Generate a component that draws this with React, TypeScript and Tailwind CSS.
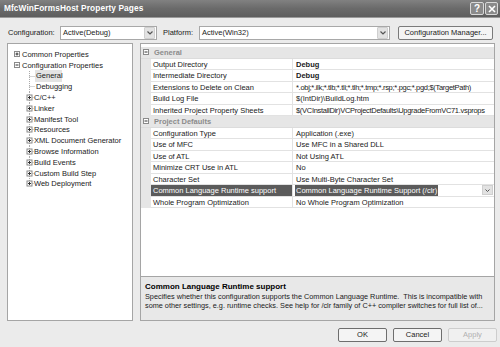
import React from "react";

function Chevron() {
  return (
    <div className="w-[11px] h-[12px] bg-[#e2e2e2] border border-[#cfcfcf] rounded-[1px] flex items-center justify-center shrink-0">
      <svg width="6" height="4" viewBox="0 0 6 4">
        <path d="M0.5 0.5 L3 3 L5.5 0.5" fill="none" stroke="#555" strokeWidth="1.2" />
      </svg>
    </div>
  );
}

function Box({ open }: { open?: boolean }) {
  return (
    <svg width="6" height="6" viewBox="0 0 6 6" className="shrink-0">
      <rect x="0.5" y="0.5" width="5" height="5" fill="#fff" stroke="#8a8a8a" />
      <path d="M1.5 3 H4.5" stroke="#333" />
      {!open && <path d="M3 1.5 V4.5" stroke="#333" />}
    </svg>
  );
}

// connector cell for child nodes of the tree
function Branch({ expander, last }: { expander?: boolean; last?: boolean }) {
  const w = expander ? 8 : 9;
  return (
    <svg width={w} height="11" viewBox={`0 0 ${w} 11`} className="shrink-0">
      <path d={last ? "M3.5 0 V5.5" : "M3.5 0 V11"} stroke="#aaa" strokeDasharray="1 1" />
      <path d={`M3.5 5.5 H${w}`} stroke="#aaa" strokeDasharray="1 1" />
      {expander && (
        <g>
          <rect x="1" y="3" width="5" height="5" fill="#fff" stroke="#8a8a8a" />
          <path d="M2 5.5 H5 M3.5 4 V7" stroke="#333" />
        </g>
      )}
    </svg>
  );
}

const children = [
  "C/C++",
  "Linker",
  "Manifest Tool",
  "Resources",
  "XML Document Generator",
  "Browse Information",
  "Build Events",
  "Custom Build Step",
  "Web Deployment",
];

function PropRow({
  name,
  value,
  bold,
  selected,
  tight,
}: {
  name: string;
  value: string;
  bold?: boolean;
  selected?: boolean;
  tight?: boolean;
}) {
  let valueCls = "flex-1 border-b border-[#e2e2e2] pl-[3px] whitespace-nowrap overflow-hidden";
  if (bold) valueCls += " font-bold";
  if (tight) valueCls += " tracking-[-0.3px]";
  return (
    <div className="flex h-[11.5px] leading-[11px]">
      <div className="w-[10px] bg-[#e6e6e6] shrink-0" />
      <div
        className={
          selected
            ? "w-[142px] shrink-0 bg-[#5b5b5b] text-white border-b border-r border-[#e2e2e2] pl-[2px] whitespace-nowrap overflow-hidden"
            : "w-[142px] shrink-0 border-b border-r border-[#e2e2e2] pl-[2px] whitespace-nowrap overflow-hidden"
        }
      >
        {name}
      </div>
      {selected ? (
        <div className="flex-1 flex items-center border-b border-[#e2e2e2] pl-[2px] pr-[1px] min-w-0">
          <span className="bg-[#5b5b5b] text-white px-[1px] whitespace-nowrap">{value}</span>
          <div className="flex-1" />
          <div className="w-[11px] h-[10px] bg-[#e2e2e2] border border-[#cfcfcf] flex items-center justify-center">
            <svg width="5" height="3" viewBox="0 0 5 3">
              <path d="M0.5 0.5 L2.5 2.5 L4.5 0.5" fill="none" stroke="#555" strokeWidth="1" />
            </svg>
          </div>
        </div>
      ) : (
        <div className={valueCls}>{value}</div>
      )}
    </div>
  );
}

function Category({ title }: { title: string }) {
  return (
    <div className="flex items-center h-[11.5px] bg-[#e6e6e6] border-b border-[#dcdcdc]">
      <div className="w-[10px] flex justify-center shrink-0">
        <Box open />
      </div>
      <span className="pl-[3px] font-bold text-[#8c8c8c] leading-[11px]">{title}</span>
    </div>
  );
}

export default function App() {
  return (
    <div
      className="w-[500px] h-[347px] bg-[#ebebeb] flex flex-col overflow-hidden text-[7.5px] text-[#1a1a1a]"
      style={{ fontFamily: '"Liberation Sans", Arial, sans-serif' }}
    >
      {/* title bar */}
      <div className="h-[18px] shrink-0 bg-gradient-to-b from-[#818181] via-[#6a6a6a] to-[#5e5e5e] flex items-center pl-[4px] pr-[2px] border-b border-[#9a9a9a]">
        <span className="text-white font-bold text-[8.3px] tracking-[0.1px]">MfcWinFormsHost Property Pages</span>
        <div className="flex-1" />
        <div className="w-[14px] h-[13px] border border-[#d8d8d8] rounded-[2px] bg-[#8a8a8a] flex items-center justify-center text-white font-bold text-[10px] leading-none">
          ?
        </div>
        <div className="w-[13px] h-[13px] ml-[1px] border border-[#d8d8d8] rounded-[2px] bg-[#8a8a8a] flex items-center justify-center">
          <svg width="8" height="8" viewBox="0 0 8 8">
            <path d="M1 1 L7 7 M7 1 L1 7" stroke="#fff" strokeWidth="1.6" />
          </svg>
        </div>
      </div>

      <div className="flex flex-col pl-[7px] pr-[5px]">
        {/* configuration row */}
        <div className="flex items-center h-[14px] mt-[8px]">
          <span className="w-[53px] pl-[1px]">Configuration:</span>
          <div className="w-[97px] h-[14px] bg-white border border-[#a8a8a8] flex items-center pl-[2px] pr-[1px]">
            <span className="flex-1">Active(Debug)</span>
            <Chevron />
          </div>
          <span className="w-[36px] ml-[6px]">Platform:</span>
          <div className="w-[191px] h-[14px] bg-white border border-[#a8a8a8] flex items-center pl-[2px] pr-[1px]">
            <span className="flex-1">Active(Win32)</span>
            <Chevron />
          </div>
          <div className="w-[95px] h-[14px] ml-[8px] bg-[#f4f4f4] border border-[#7a7a7a] rounded-[2px] flex items-center justify-center">
            Configuration Manager...
          </div>
        </div>

        {/* main area */}
        <div className="flex h-[278px] mt-[3px] gap-[7px]">
          {/* tree */}
          <div className="w-[126px] shrink-0 bg-white border border-[#a5a5a5] pt-[5px] text-[7.5px]">
            <div className="flex items-center h-[10.8px] pl-[6px]">
              <Box />
              <span className="pl-[2px]">Common Properties</span>
            </div>
            <div className="flex items-center h-[10.8px] pl-[6px]">
              <Box open />
              <span className="pl-[2px]">Configuration Properties</span>
            </div>
            <div className="flex items-center h-[10.8px] pl-[18px]">
              <Branch />
              <span className="px-[1px] bg-[#e3e3e3] w-[27px]">General</span>
            </div>
            <div className="flex items-center h-[10.8px] pl-[18px]">
              <Branch />
              <span className="pl-[1px]">Debugging</span>
            </div>
            {children.map((c, i) => (
              <div key={c} className="flex items-center h-[10.8px] pl-[18px]">
                <Branch expander last={i === children.length - 1} />
                <span>{c}</span>
              </div>
            ))}
          </div>

          {/* right side */}
          <div className="flex-1 flex flex-col min-w-0">
            <div className="h-[234px] bg-white border border-[#a5a5a5] flex flex-col pt-[3px]">
              <Category title="General" />
              <PropRow name="Output Directory" value="Debug" bold />
              <PropRow name="Intermediate Directory" value="Debug" bold />
              <PropRow
                name="Extensions to Delete on Clean"
                value='*.obj;*.ilk;*.tlb;*.tli;*.tlh;*.tmp;*.rsp;*.pgc;*.pgd;$(TargetPath)'
                tight
              />
              <PropRow name="Build Log File" value="$(IntDir)\BuildLog.htm" />
              <PropRow
                name="Inherited Project Property Sheets"
                value="$(VCInstallDir)VCProjectDefaults\UpgradeFromVC71.vsprops"
                tight
              />
              <Category title="Project Defaults" />
              <PropRow name="Configuration Type" value="Application (.exe)" />
              <PropRow name="Use of MFC" value="Use MFC in a Shared DLL" />
              <PropRow name="Use of ATL" value="Not Using ATL" />
              <PropRow name="Minimize CRT Use in ATL" value="No" />
              <PropRow name="Character Set" value="Use Multi-Byte Character Set" />
              <PropRow
                name="Common Language Runtime support"
                value="Common Language Runtime Support (/clr)"
                selected
              />
              <PropRow name="Whole Program Optimization" value="No Whole Program Optimization" />
            </div>
            <div className="h-[44px] bg-[#e8e8e8] border border-t-0 border-[#a5a5a5] px-[4px] pt-[5px]">
              <div className="font-bold text-[8px] leading-[10px] text-black">Common Language Runtime support</div>
              <div className="leading-[8.5px] mt-[1px] text-[7.3px]">
                Specifies whether this configuration supports the Common Language Runtime.&nbsp; This is incompatible with
                <br />
                some other settings, e.g. runtime checks. See help for /clr family of C++ compiler switches for full list of...
              </div>
            </div>
          </div>
        </div>

        {/* buttons */}
        <div className="flex justify-end gap-[6px] mt-[7px] mr-[-2px]">
          <div className="w-[49px] h-[14px] bg-[#f4f4f4] border border-[#6e6e6e] rounded-[2px] flex items-center justify-center">
            OK
          </div>
          <div className="w-[49px] h-[14px] bg-[#f4f4f4] border border-[#6e6e6e] rounded-[2px] flex items-center justify-center">
            Cancel
          </div>
          <div className="w-[49px] h-[14px] bg-[#f0f0f0] border border-[#cdcdcd] rounded-[2px] flex items-center justify-center text-[#b0b0b0]">
            Apply
          </div>
        </div>
      </div>
    </div>
  );
}
